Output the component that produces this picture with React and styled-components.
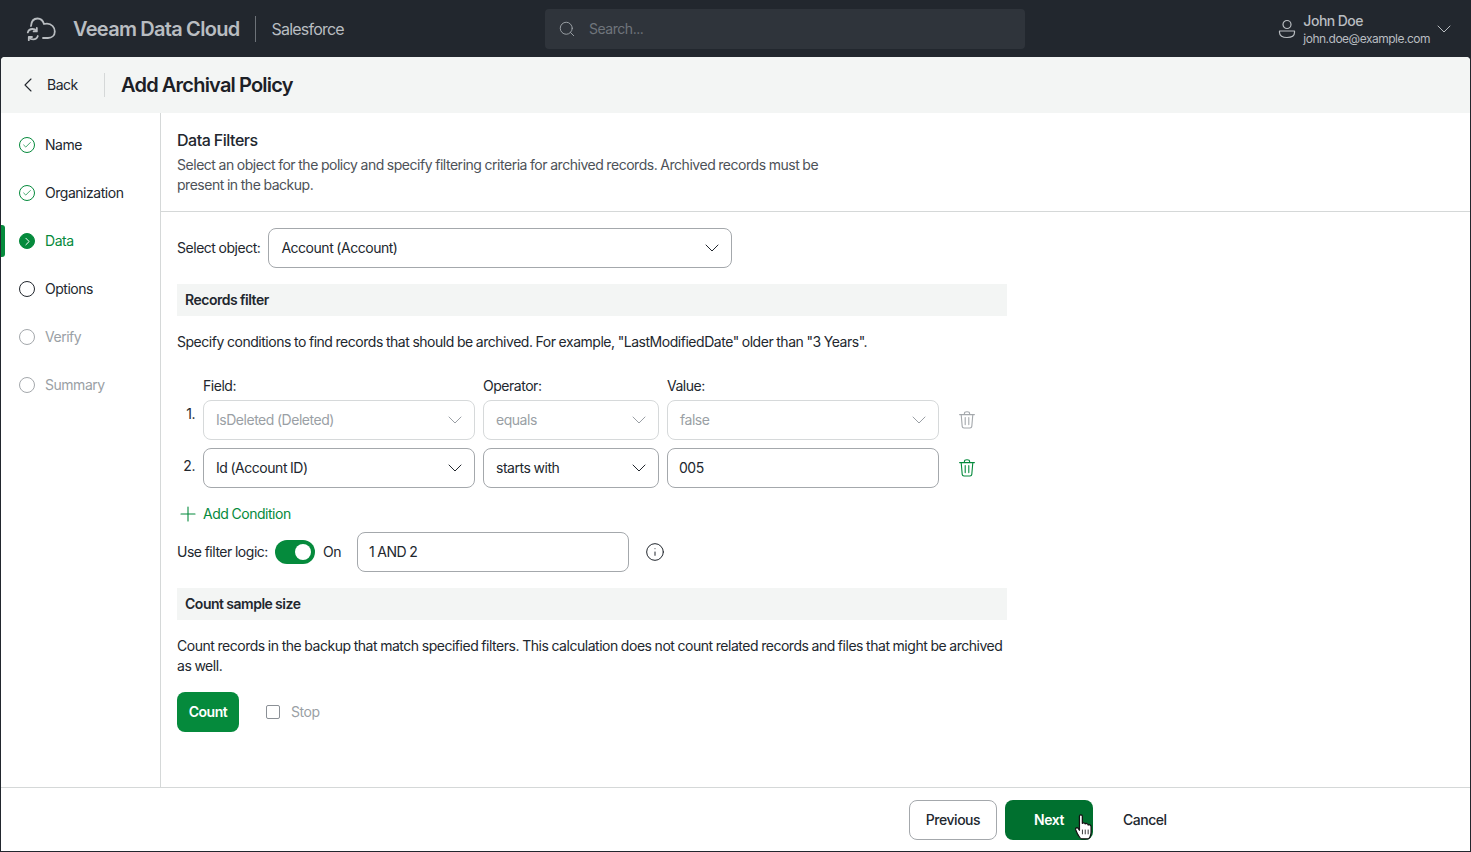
import styled, { createGlobalStyle } from 'styled-components';
import { ChevronDown, ChevronLeft, ChevronRight, Check, Plus, Search, Info } from 'lucide-react';

const GlobalStyle = createGlobalStyle`
  html, body { margin: 0; padding: 0; height: 100%; }
  body {
    font-family: Inter, "Liberation Sans", sans-serif;
    font-size: 14px;
    line-height: 20px;
    letter-spacing: -0.47px;
    word-spacing: -0.4px;
    color: #22272e;
    background: #22272e;
    overflow: hidden;
  }
  * { box-sizing: border-box; }
  button { letter-spacing: inherit; word-spacing: inherit; }
`;

const steps = [
  { name: 'Name', state: 'done' },
  { name: 'Organization', state: 'done' },
  { name: 'Data', state: 'active' },
  { name: 'Options', state: 'next' },
  { name: 'Verify', state: 'off' },
  { name: 'Summary', state: 'off' },
];

const CloudLogo = () => (
  <svg width="30" height="24" viewBox="0 0 30 24" fill="none" stroke="#b9bdc1" strokeWidth="1.8" strokeLinecap="round" strokeLinejoin="round">
    <path d="M5 9 C5.4 4 8 1.5 11.5 1.5 C14.6 1.5 17 3.6 18 7 C19 6.6 20 6.6 21 6.6 C25.6 6.6 28.8 10.4 28.8 14.4 C28.8 18.4 25.8 21 22 21 H17" />
    <path d="M1.8 15.4 C2.4 13.4 4.2 12 6.4 12 C8.2 12 9.6 12.8 10.4 14" />
    <path d="M10.8 11 V14.4 H7.6" />
    <path d="M11.8 19 C11.2 21 9.4 22.4 7.2 22.4 C5.4 22.4 4 21.6 3.2 20.4" />
    <path d="M2.8 23.2 V20 H6" />
  </svg>
);

const UserIcon = () => (
  <svg width="18" height="20" viewBox="0 0 18 20" fill="none" stroke="#b9bdc1" strokeWidth="1.2">
    <circle cx="9" cy="5.5" r="4" />
    <path d="M1.5 12 H16.5 V13.5 C16.5 16.6 13.6 18.5 9 18.5 C4.4 18.5 1.5 16.6 1.5 13.5 Z" strokeLinejoin="round" />
  </svg>
);

const TrashIcon = ({ color }) => (
  <svg width="16" height="18" viewBox="0 0 16 18" fill="none" stroke={color} strokeWidth="1.1" strokeLinecap="round" strokeLinejoin="round">
    <path d="M0.6 3.6 H15.4" />
    <path d="M5.4 3.4 V2.4 C5.4 1.4 6.2 0.8 8 0.8 C9.8 0.8 10.6 1.4 10.6 2.4 V3.4" />
    <path d="M2.2 3.8 L3.2 15.4 C3.3 16.4 4 17 5 17 H11 C12 17 12.7 16.4 12.8 15.4 L13.8 3.8" />
    <path d="M6.2 6.6 V13.6 M9.8 6.6 V13.6" />
  </svg>
);

const HandCursor = () => (
  <svg width="20" height="26" viewBox="0 0 18 25">
    <path
      d="M4.6 2.2 C4.6 0.4 7.4 0.4 7.4 2.2 V9 C7.8 8.2 10 8.2 10.2 9.6 C10.8 8.8 12.8 9 13 10.6 C13.8 10 15.8 10.4 15.8 12.2 V17.5 C15.8 20.6 14.2 23.8 13 23.8 H6.6 C5.2 23.8 4.2 21.4 3 19.6 L1 15.2 C0.4 13.6 2.4 12.4 3.4 13.8 L4.6 15.6 Z"
      fill="#fff"
      stroke="#111"
      strokeWidth="1.2"
      strokeLinejoin="round"
    />
    <path d="M7.5 15 V19.5 M10.2 15 V19.5 M13 15 V19.5" stroke="#111" strokeWidth="0.8" />
  </svg>
);

const SelectBox = ({ value, disabled, width }) => (
  <Field $select $disabled={disabled} $width={width}>
    <span>{value}</span>
    <ChevronDown size={24} strokeWidth={1} />
  </Field>
);

const App = () => (
  <>
    <GlobalStyle />
    <Page>
      <TopBar>
        <Brand>
          <CloudLogo />
          <BrandName>Veeam Data Cloud</BrandName>
          <ProductName>Salesforce</ProductName>
        </Brand>
        <SearchBox>
          <Search size={18} strokeWidth={1.2} color="#a3a8ad" />
          <span>Search...</span>
        </SearchBox>
        <UserBlock>
          <UserIcon />
          <UserText>
            <UserName>John Doe</UserName>
            <UserMail>john.doe@example.com</UserMail>
          </UserText>
          <ChevronDown size={24} strokeWidth={1} color="#b9bdc1" />
        </UserBlock>
      </TopBar>

      <Panel>
        <TitleBar>
          <BackLink>
            <ChevronLeft size={24} strokeWidth={1.1} />
            <span>Back</span>
          </BackLink>
          <PageTitle>Add Archival Policy</PageTitle>
        </TitleBar>

        <Body>
          <Sidebar>
            {steps.map((step) => (
              <Step key={step.name} $state={step.state}>
                <StepMark $state={step.state}>
                  {step.state === 'done' && <Check size={10} strokeWidth={1.8} />}
                  {step.state === 'active' && <ChevronRight size={13} strokeWidth={1.8} />}
                </StepMark>
                {step.name}
              </Step>
            ))}
          </Sidebar>

          <Main>
            <Intro>
              <IntroTitle>Data Filters</IntroTitle>
              <IntroText>
                Select an object for the policy and specify filtering criteria for archived records. Archived records must be present in the backup.
              </IntroText>
            </Intro>

            <Form>
              <ObjectRow>
                <span>Select object:</span>
                <SelectBox value="Account (Account)" width={464} />
              </ObjectRow>

              <SectionBar>Records filter</SectionBar>
              <SectionText>
                Specify conditions to find records that should be archived. For example, "LastModifiedDate" older than "3 Years".
              </SectionText>

              <ConditionGrid>
                <span />
                <ColLabel>Field:</ColLabel>
                <ColLabel>Operator:</ColLabel>
                <ColLabel>Value:</ColLabel>
                <span />

                <RowNumber $top={4}>1.</RowNumber>
                <SelectBox value="IsDeleted (Deleted)" disabled />
                <SelectBox value="equals" disabled />
                <SelectBox value="false" disabled />
                <TrashCell><TrashIcon color="#a4a8ac" /></TrashCell>

                <RowNumber $top={8}>2.</RowNumber>
                <SelectBox value="Id (Account ID)" />
                <SelectBox value="starts with" />
                <Field><span>005</span></Field>
                <TrashCell><TrashIcon color="#058a3c" /></TrashCell>
              </ConditionGrid>

              <AddCondition>
                <Plus size={24} strokeWidth={1.1} />
                Add Condition
              </AddCondition>

              <LogicRow>
                <span>Use filter logic:</span>
                <Toggle />
                <ToggleLabel>On</ToggleLabel>
                <Field $width={272}><span>1 AND 2</span></Field>
                <InfoWrap><Info size={20} strokeWidth={1.2} /></InfoWrap>
              </LogicRow>

              <SectionBar>Count sample size</SectionBar>
              <SectionText>
                Count records in the backup that match specified filters. This calculation does not count related records and files that might be archived as well.
              </SectionText>

              <CountRow>
                <CountButton>Count</CountButton>
                <StopBox />
                <StopLabel>Stop</StopLabel>
              </CountRow>
            </Form>
          </Main>
        </Body>

        <Footer>
          <OutlineButton>Previous</OutlineButton>
          <NextButton>
            Next
            <CursorSpot><HandCursor /></CursorSpot>
          </NextButton>
          <CancelButton>Cancel</CancelButton>
        </Footer>
      </Panel>
    </Page>
  </>
);

const Page = styled.div`
  width: 1471px;
  height: 852px;
  display: flex;
  flex-direction: column;
  background: #22272e;
`;

const TopBar = styled.header`
  height: 57px;
  flex: none;
  display: flex;
  align-items: center;
  padding: 0 15px 0 26px;
`;

const Brand = styled.div`
  display: flex;
  align-items: center;
  width: 519px;
`;

const BrandName = styled.div`
  margin-left: 17px;
  padding-right: 15px;
  border-right: 1px solid #6d7278;
  font-size: 20px;
  line-height: 26px;
  font-weight: 600;
  color: #b9bdc1;
  letter-spacing: -0.68px;
  word-spacing: -0.4px;
`;

const ProductName = styled.div`
  margin-left: 16px;
  font-size: 16px;
  color: #b9bdc1;
  letter-spacing: -0.8px;
`;

const SearchBox = styled.div`
  width: 480px;
  height: 40px;
  display: flex;
  align-items: center;
  gap: 13px;
  padding: 1px 0 0 13px;
  background: #2f343b;
  border-radius: 4px;
  color: #6f757b;
`;

const UserBlock = styled.div`
  margin-left: auto;
  display: flex;
  align-items: center;
  color: #b9bdc1;
`;

const UserText = styled.div`
  margin: 0 2px 0 7px;
  padding-top: 2px;
  display: flex;
  flex-direction: column;
`;

const UserName = styled.div`
  font-size: 14px;
  line-height: 18px;
  font-weight: 500;
`;

const UserMail = styled.div`
  font-size: 12px;
  line-height: 18px;
  letter-spacing: -0.5px;
`;

const Panel = styled.div`
  flex: 1;
  min-height: 0;
  margin: 0 1px 1px;
  display: flex;
  flex-direction: column;
  background: #fff;
  border-radius: 4px 4px 0 0;
  overflow: hidden;
`;

const TitleBar = styled.div`
  height: 56px;
  flex: none;
  display: flex;
  align-items: center;
  background: #f3f5f4;
  padding-left: 15px;
`;

const BackLink = styled.div`
  width: 89px;
  height: 24px;
  display: flex;
  align-items: center;
  gap: 7px;
  border-right: 1px solid #d5d8d8;
`;

const PageTitle = styled.h1`
  margin: 0 0 0 16px;
  font-size: 20px;
  line-height: 28px;
  font-weight: 600;
  color: #1c2026;
  letter-spacing: -0.77px;
  word-spacing: -0.4px;
`;

const Body = styled.div`
  flex: 1;
  min-height: 0;
  display: flex;
`;

const stepColors = { done: '#22272e', active: '#058a3c', next: '#22272e', off: '#9a9fa5' };

const Sidebar = styled.nav`
  width: 160px;
  flex: none;
  border-right: 1px solid #d5d8d8;
  padding-top: 8px;
`;

const Step = styled.div`
  position: relative;
  height: 48px;
  display: flex;
  align-items: center;
  gap: 10px;
  padding-left: 18px;
  color: ${(p) => stepColors[p.$state]};

  ${(p) => p.$state === 'active' && `
    &::before {
      content: '';
      position: absolute;
      left: 0;
      top: 8px;
      width: 4px;
      height: 32px;
      background: #058a3c;
      border-radius: 0 3px 3px 0;
    }
  `}
`;

const StepMark = styled.span`
  width: 16px;
  height: 16px;
  border-radius: 50%;
  display: flex;
  align-items: center;
  justify-content: center;
  border: ${(p) => (p.$state === 'next' ? 1.5 : 1.2)}px solid ${(p) => (p.$state === 'done' || p.$state === 'active' ? '#058a3c' : p.$state === 'next' ? '#22272e' : '#a4a8ac')};
  background: ${(p) => (p.$state === 'active' ? '#058a3c' : 'transparent')};
  color: ${(p) => (p.$state === 'active' ? '#fff' : '#058a3c')};
`;

const Main = styled.main`
  flex: 1;
  min-width: 0;
`;

const Intro = styled.section`
  height: 99px;
  padding: 17px 16px 0;
  border-bottom: 1px solid #d5d8d8;
`;

const IntroTitle = styled.h2`
  margin: 0 0 5px;
  font-size: 16px;
  line-height: 20px;
  font-weight: 500;
`;

const IntroText = styled.p`
  margin: 0;
  max-width: 660px;
  color: #4d5258;
`;

const Form = styled.div`
  width: 862px;
  padding: 16px 16px 0;
`;

const ObjectRow = styled.div`
  display: flex;
  align-items: center;
  gap: 8px;
`;

const Field = styled.div`
  width: ${(p) => (p.$width ? `${p.$width}px` : 'auto')};
  height: 40px;
  display: flex;
  align-items: center;
  justify-content: space-between;
  padding: 0 7px 0 ${(p) => (p.$select ? 12 : 11)}px;
  background: #fff;
  border: 1px solid ${(p) => (p.$disabled ? '#d6d9da' : '#a4a8ac')};
  border-radius: 8px;
  color: ${(p) => (p.$disabled ? '#9a9fa5' : '#22272e')};
`;

const SectionBar = styled.div`
  height: 32px;
  margin-top: 16px;
  padding-left: 8px;
  display: flex;
  align-items: center;
  background: #f3f5f4;
  font-weight: 600;
`;

const SectionText = styled.p`
  margin: 16px 0 0;
`;

const ConditionGrid = styled.div`
  margin-top: 24px;
  display: grid;
  grid-template-columns: 18px 272px 176px 272px 56px;
  grid-template-rows: 16px 40px 40px;
  gap: 8px;
`;

const ColLabel = styled.div`
  line-height: 20px;
`;

const RowNumber = styled.div`
  text-align: right;
  padding-top: ${(p) => p.$top}px;
`;

const TrashCell = styled.div`
  display: flex;
  align-items: center;
  padding-left: 12px;
`;

const AddCondition = styled.div`
  height: 28px;
  margin: 12px 0 0 -1px;
  display: flex;
  align-items: center;
  gap: 3px;
  color: #058a3c;
`;

const LogicRow = styled.div`
  margin-top: 4px;
  display: flex;
  align-items: center;
`;

const Toggle = styled.span`
  position: relative;
  width: 40px;
  height: 24px;
  margin-left: 7px;
  border-radius: 12px;
  background: #058a3c;

  &::after {
    content: '';
    position: absolute;
    top: 4px;
    right: 4px;
    width: 16px;
    height: 16px;
    border-radius: 50%;
    background: #fff;
  }
`;

const ToggleLabel = styled.span`
  margin: 0 16px 0 8px;
`;

const InfoWrap = styled.span`
  margin-left: 16px;
  display: flex;
`;

const CountRow = styled.div`
  margin-top: 16px;
  display: flex;
  align-items: center;
`;

const CountButton = styled.button`
  width: 62px;
  height: 40px;
  padding: 0;
  border: none;
  border-radius: 8px;
  background: #058a3c;
  color: #fff;
  font: 600 14px/20px Inter, "Liberation Sans", sans-serif;
`;

const StopBox = styled.span`
  width: 14px;
  height: 14px;
  margin: 0 11px 0 27px;
  border: 1px solid #8b9096;
  border-radius: 2px;
`;

const StopLabel = styled.span`
  color: #9a9fa5;
`;

const Footer = styled.footer`
  height: 64px;
  flex: none;
  display: flex;
  align-items: center;
  gap: 8px;
  padding-left: 908px;
  border-top: 1px solid #d5d8d8;
`;

const OutlineButton = styled.button`
  width: 88px;
  height: 40px;
  padding: 0;
  background: #fff;
  border: 1px solid #a4a8ac;
  border-radius: 8px;
  color: #22272e;
  font: 500 14px/20px Inter, "Liberation Sans", sans-serif;
`;

const NextButton = styled.button`
  position: relative;
  width: 88px;
  height: 40px;
  padding: 0;
  border: none;
  border-radius: 8px;
  background: #00702f;
  color: #fff;
  font: 600 14px/20px Inter, "Liberation Sans", sans-serif;
`;

const CursorSpot = styled.span`
  position: absolute;
  left: 69px;
  top: 14px;
  display: flex;
`;

const CancelButton = styled.button`
  height: 40px;
  margin-left: 8px;
  padding: 0 0 0 14px;
  border: none;
  background: transparent;
  color: #22272e;
  font: 500 14px/20px Inter, "Liberation Sans", sans-serif;
`;

export default App;
